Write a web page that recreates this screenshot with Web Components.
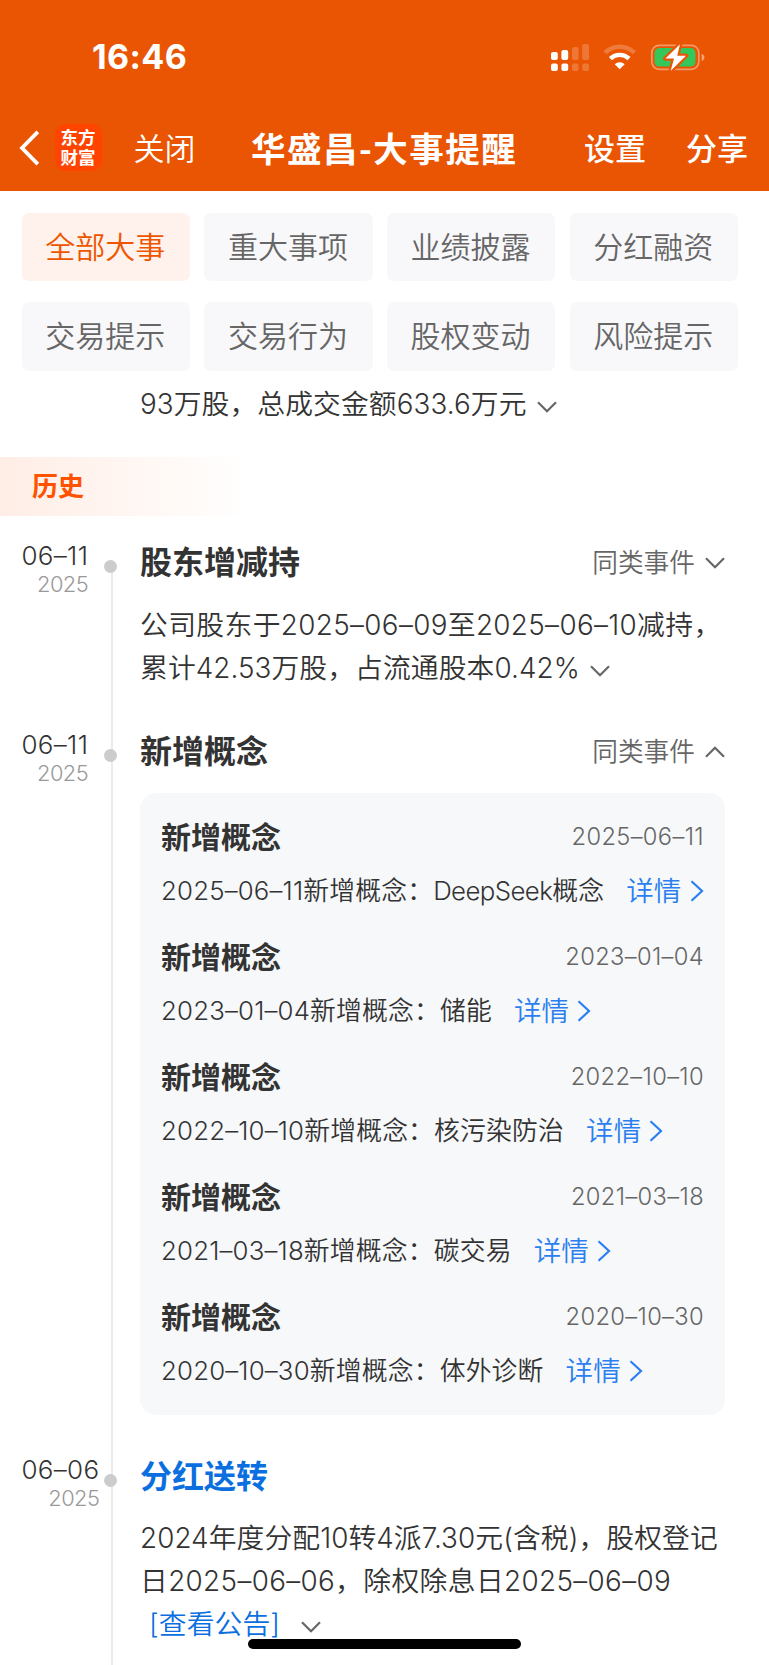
<!DOCTYPE html>
<html lang="zh-CN">
<head>
<meta charset="UTF-8">
<meta name="viewport" content="width=device-width, initial-scale=1.0">
<title>华盛昌-大事提醒</title>
<style>
    html, body {
        margin: 0;
        padding: 0;
        background: #fff;
    }

    body {
        height: 1665px;
        overflow: hidden;
        font-family: Inter, "Noto Sans CJK SC", sans-serif;
        font-weight: 365;
        color: #333;
    }
</style>
</head>
<body>
<reminder-page></reminder-page>

<script>
    class StatusBar extends HTMLElement {
        constructor() {
            super()
            this.attachShadow({ mode: "open" })
            this.shadowRoot.innerHTML = `
                <style>
                    :host {
                        display: flex;
                        justify-content: space-between;
                        align-items: center;
                        height: 57px;
                        padding: 29px 64px 0 92px;
                        box-sizing: content-box;
                        color: #fff;
                    }
                    .time { margin-bottom: 2px; font-size: 34px; font-weight: 700; line-height: 40px; letter-spacing: .4px; }
                    svg { display: block; }
                </style>
                <span class="time">16:46</span>
                <svg width="155" height="30" viewBox="0 0 155 30">
                    <!-- sinal das duas linhas -->
                    <g fill="#fff">
                        <rect x="1" y="9" width="6.8" height="8" rx="2"/>
                        <rect x="11.4" y="7" width="6.8" height="10" rx="2"/>
                        <rect x="1" y="20.5" width="6.8" height="7.4" rx="2"/>
                        <rect x="11.4" y="20.5" width="6.8" height="7.4" rx="2"/>
                        <g opacity=".2">
                            <rect x="22" y="4" width="6.6" height="13" rx="2"/>
                            <rect x="32.2" y="1" width="6.8" height="16" rx="2"/>
                            <rect x="22" y="20.5" width="6.6" height="7.4" rx="2"/>
                            <rect x="32.2" y="20.5" width="6.8" height="7.4" rx="2"/>
                        </g>
                    </g>
                    <!-- wifi -->
                    <g fill="none" stroke="#fff" stroke-width="4.4">
                        <path d="M55 9.8a21 21 0 0 1 29.4 0" opacity=".22"/>
                        <path d="M60.4 15.6a13.5 13.5 0 0 1 18.6 0"/>
                    </g>
                    <path d="M69.7 26.3l-5-5a7.2 7.2 0 0 1 10 0z" fill="#fff"/>
                    <!-- bateria -->
                    <rect x="101.8" y="2.3" width="47" height="24" rx="7.5" fill="none" stroke="#fff" stroke-opacity=".4" stroke-width="1.7"/>
                    <path d="M151.6 10.8c1.8.6 2.8 2 2.8 3.6s-1 3-2.8 3.6z" fill="#fff" fill-opacity=".45"/>
                    <rect x="104.5" y="5" width="41" height="18.6" rx="5" fill="#34c759"/>
                    <path d="M130 1.2L115.4 15.5H124L120.6 28 136 12.7H127.2z" fill="#fff" stroke="#ea5504" stroke-width="4.5" paint-order="stroke" stroke-linejoin="round"/>
                </svg>
            `
        }
    }

    class NavBar extends HTMLElement {
        constructor() {
            super()
            this.attachShadow({ mode: "open" })
            this.shadowRoot.innerHTML = `
                <style>
                    :host {
                        display: flex;
                        align-items: center;
                        height: 86px;
                        margin-top: 19px;
                        padding: 0 21px 0 19px;
                        box-sizing: border-box;
                        color: #fff;
                        white-space: nowrap;
                        line-height: 40px;
                        font-size: 31px;
                        font-family: "Noto Sans CJK SC", sans-serif;
                    }
                    span { margin-bottom: 3px; }
                    .logo {
                        width: 47px;
                        height: 47px;
                        margin: 0 0 1px 14.5px;
                        padding: 4px 0 5px;
                        box-sizing: border-box;
                        border-radius: 11px;
                        background: #ff4400;
                        text-align: center;
                        font-family: "Liberation Sans", "Noto Sans CJK SC", sans-serif;
                        font-size: 17.5px;
                        font-weight: 700;
                        line-height: 20px;
                    }
                    .close { margin-left: 32px; }
                    .title { margin-left: 55.5px; font-size: 34.5px; letter-spacing: 1.5px; font-weight: 600; }
                    .actions { display: flex; gap: 40px; margin-left: auto; font-weight: 500; }
                </style>
                <svg width="21" height="40" viewBox="0 0 21 40">
                    <path d="M18.8 3.8L3 20l15.8 16.2" fill="none" stroke="#fff" stroke-width="3.8"/>
                </svg>
                <div class="logo">东方<br>财富</div>
                <span class="close">关闭</span>
                <span class="title">华盛昌-大事提醒</span>
                <div class="actions"><span>设置</span><span>分享</span></div>
            `
        }
    }

    class FilterTabs extends HTMLElement {
        constructor() {
            super()
            this.attachShadow({ mode: "open" })
            this.shadowRoot.innerHTML = `
                <style>
                    :host {
                        display: grid;
                        grid-template-columns: repeat(4, 1fr);
                        gap: 21.5px 14.5px;
                        padding: 21.5px 31.2px 0 21.7px;
                    }
                    .tab {
                        height: 68.3px;
                        border-radius: 7px;
                        background: #f8f8fb;
                        color: #666;
                        font-size: 30px;
                        line-height: 69px;
                        text-align: center;
                        text-indent: -1px;
                        cursor: pointer;
                    }
                    .tab.active { background: #fff1eb; color: #ee5500; }
                </style>
            `
        }

        connectedCallback() {
            const tabs = ["全部大事", "重大事项", "业绩披露", "分红融资", "交易提示", "交易行为", "股权变动", "风险提示"]
            tabs.forEach((label, index) => {
                const div = document.createElement("div")
                div.className = index === 0 ? "tab active" : "tab"
                div.textContent = label
                this.shadowRoot.appendChild(div)
            })
            this.shadowRoot.addEventListener("click", (e) => {
                if (!e.target.classList.contains("tab")) return
                this.shadowRoot.querySelector(".active").classList.remove("active")
                e.target.classList.add("active")
            })
        }
    }

    // Seta usada nos textos e nos botões: dir = down | up | right
    class ArrowIcon extends HTMLElement {
        constructor() {
            super()
            this.attachShadow({ mode: "open" })
        }

        connectedCallback() {
            const shapes = {
                down: { w: 20, h: 12, d: "M1 1.2l9 9 9-9" },
                up: { w: 20, h: 12, d: "M1 10.8l9-9 9 9" },
                right: { w: 14, h: 22, d: "M1.5 1.2l10.5 9.8-10.5 9.8" }
            }
            const { w, h, d } = shapes[this.getAttribute("dir") || "down"]
            this.shadowRoot.innerHTML = `
                <style>
                    :host { display: inline-block; color: #666; }
                    svg { display: block; }
                </style>
                <svg width="${w}" height="${h}" viewBox="0 0 ${w} ${h}">
                    <path d="${d}" fill="none" stroke="currentColor" stroke-width="2.2"/>
                </svg>
            `
        }
    }

    class SectionLabel extends HTMLElement {
        constructor() {
            super()
            this.attachShadow({ mode: "open" })
            this.shadowRoot.innerHTML = `
                <style>
                    :host {
                        display: block;
                        height: 58.5px;
                        padding-left: 32px;
                        background: linear-gradient(90deg, #ffede5 0, #fff 252px);
                        color: #ff5200;
                        font-size: 26px;
                        font-weight: 600;
                        line-height: 59px;
                    }
                </style>
                <slot></slot>
            `
        }
    }

    class TimelineEvent extends HTMLElement {
        constructor() {
            super()
            this.attachShadow({ mode: "open" })
        }

        connectedCallback() {
            const more = this.getAttribute("more")
            this.shadowRoot.innerHTML = `
                <style>
                    :host { display: flex; }
                    .when { width: 104px; padding-left: 21.5px; box-sizing: border-box; }
                    .date { width: fit-content; text-align: right; white-space: nowrap; }
                    .day { font-size: 26px; line-height: 32px; letter-spacing: .3px; }
                    .year { font-size: 21.8px; line-height: 25px; color: #999; letter-spacing: -.5px; }
                    .axis {
                        display: flex;
                        justify-content: center;
                        width: 13.5px;
                        background: linear-gradient(#ebebeb, #ebebeb) 7px 0 / 2px 100% no-repeat;
                    }
                    :host([first]) .axis { background-position: 7px 27px; }
                    .dot { width: 13px; height: 13px; margin-top: 20px; border-radius: 50%; background: #ccc; }
                    .body { width: 585px; margin-left: 22.5px; padding-bottom: 39px; }
                    .head { display: flex; justify-content: space-between; align-items: center; height: 46px; margin-bottom: 18px; }
                    h3 { margin: 0; font-size: 32px; font-weight: 600; line-height: 46px; }
                    :host([link]) h3 { color: #0b6fdf; }
                    :host([link]) .head { margin-bottom: 17px; }
                    .more { display: flex; align-items: center; gap: 10px; color: #666; font-size: 25.7px; line-height: 46px; }
                </style>
                <div class="when">
                    <div class="date">
                        <div class="day">${this.getAttribute("day")}</div>
                        <div class="year">${this.getAttribute("year")}</div>
                    </div>
                </div>
                <div class="axis"><div class="dot"></div></div>
                <div class="body">
                    <div class="head">
                        <h3>${this.getAttribute("title-text")}</h3>
                        ${more ? `<span class="more">同类事件 <arrow-icon dir="${more}"></arrow-icon></span>` : ""}
                    </div>
                    <slot></slot>
                </div>
            `
        }
    }

    class EventText extends HTMLElement {
        constructor() {
            super()
            this.attachShadow({ mode: "open" })
            this.shadowRoot.innerHTML = `
                <style>
                    :host { display: block; font-size: 27.8px; line-height: 43px; white-space: nowrap; letter-spacing: .08px; }
                    ::slotted(span) { letter-spacing: .36px; }
                    ::slotted(arrow-icon) { margin-left: 10px; vertical-align: 1px; }
                    ::slotted(a) { margin: 0 11px 0 9px; color: #0b6fdf; text-decoration: none; }
                </style>
                <slot></slot>
            `
        }
    }

    class ConceptCard extends HTMLElement {
        constructor() {
            super()
            this.attachShadow({ mode: "open" })
            this.shadowRoot.innerHTML = `
                <style>
                    :host {
                        display: flex;
                        flex-direction: column;
                        gap: 22px;
                        height: 621.5px;
                        padding: 22px 21px 0;
                        box-sizing: border-box;
                        border-radius: 16px;
                        background: #f7f8fa;
                        white-space: nowrap;
                    }
                    .item { height: 98px; }
                    .top { display: flex; justify-content: space-between; height: 44px; line-height: 44px; }
                    .name { font-size: 30px; font-weight: 600; }
                    .date { font-size: 23.7px; line-height: 43px; color: #666; letter-spacing: .35px; }
                    .text { display: flex; align-items: center; height: 38px; margin-top: 13px; line-height: 38px; font-size: 25.8px; letter-spacing: .18px; }
                    .latin { letter-spacing: -.6px; }
                    .link { display: flex; align-items: center; gap: 8px; margin-left: 22px; font-size: 27.5px; color: #2b7ff0; }
                    arrow-icon { color: inherit; }
                </style>
            `
        }

        connectedCallback() {
            const concepts = [
                { date: "2025–06–11", name: "<span class=\"latin\">DeepSeek</span>概念" },
                { date: "2023–01–04", name: "储能" },
                { date: "2022–10–10", name: "核污染防治" },
                { date: "2021–03–18", name: "碳交易" },
                { date: "2020–10–30", name: "体外诊断" }
            ]
            concepts.forEach(concept => {
                const div = document.createElement("div")
                div.classList.add("item")
                div.innerHTML = `
                    <div class="top">
                        <span class="name">新增概念</span>
                        <span class="date">${concept.date}</span>
                    </div>
                    <div class="text">
                        <span>${concept.date}新增概念：${concept.name}</span>
                        <span class="link">详情<arrow-icon dir="right"></arrow-icon></span>
                    </div>
                `
                this.shadowRoot.appendChild(div)
            })
        }
    }

    class ReminderPage extends HTMLElement {
        constructor() {
            super()
            this.attachShadow({ mode: "open" })
            this.shadowRoot.innerHTML = `
                <style>
                    :host { display: block; position: relative; width: 769px; height: 1665px; overflow: hidden; }
                    header { height: 191px; background: #ea5504; }
                    .rest { padding: 12.5px 0 31px 140px; }
                    section-label { margin-bottom: 24.5px; }
                    .home { position: absolute; left: 248px; bottom: 16px; width: 273px; height: 10px; border-radius: 5px; background: #000; }
                </style>
                <header>
                    <status-bar></status-bar>
                    <nav-bar></nav-bar>
                </header>
                <filter-tabs></filter-tabs>
                <event-text class="rest">93万股，总成交金额633.6万元<arrow-icon></arrow-icon></event-text>
                <section-label>历史</section-label>
                <timeline-event first day="06–11" year="2025" title-text="股东增减持" more="down">
                    <event-text><span>公司股东于2025–06–09至2025–06–10减持，</span><br>累计42.53万股，占流通股本0.42%<arrow-icon></arrow-icon></event-text>
                </timeline-event>
                <timeline-event day="06–11" year="2025" title-text="新增概念" more="up">
                    <concept-card></concept-card>
                </timeline-event>
                <timeline-event link day="06–06" year="2025" title-text="分红送转">
                    <event-text>2024年度分配10转4派7.30元(含税)，股权登记<br><span>日2025–06–06，除权除息日2025–06–09</span><br><a>[查看公告]</a><arrow-icon></arrow-icon></event-text>
                </timeline-event>
                <div class="home"></div>
            `
        }
    }

    customElements.define("status-bar", StatusBar)
    customElements.define("nav-bar", NavBar)
    customElements.define("filter-tabs", FilterTabs)
    customElements.define("arrow-icon", ArrowIcon)
    customElements.define("section-label", SectionLabel)
    customElements.define("timeline-event", TimelineEvent)
    customElements.define("event-text", EventText)
    customElements.define("concept-card", ConceptCard)
    customElements.define("reminder-page", ReminderPage)
</script>
</body>
</html>
